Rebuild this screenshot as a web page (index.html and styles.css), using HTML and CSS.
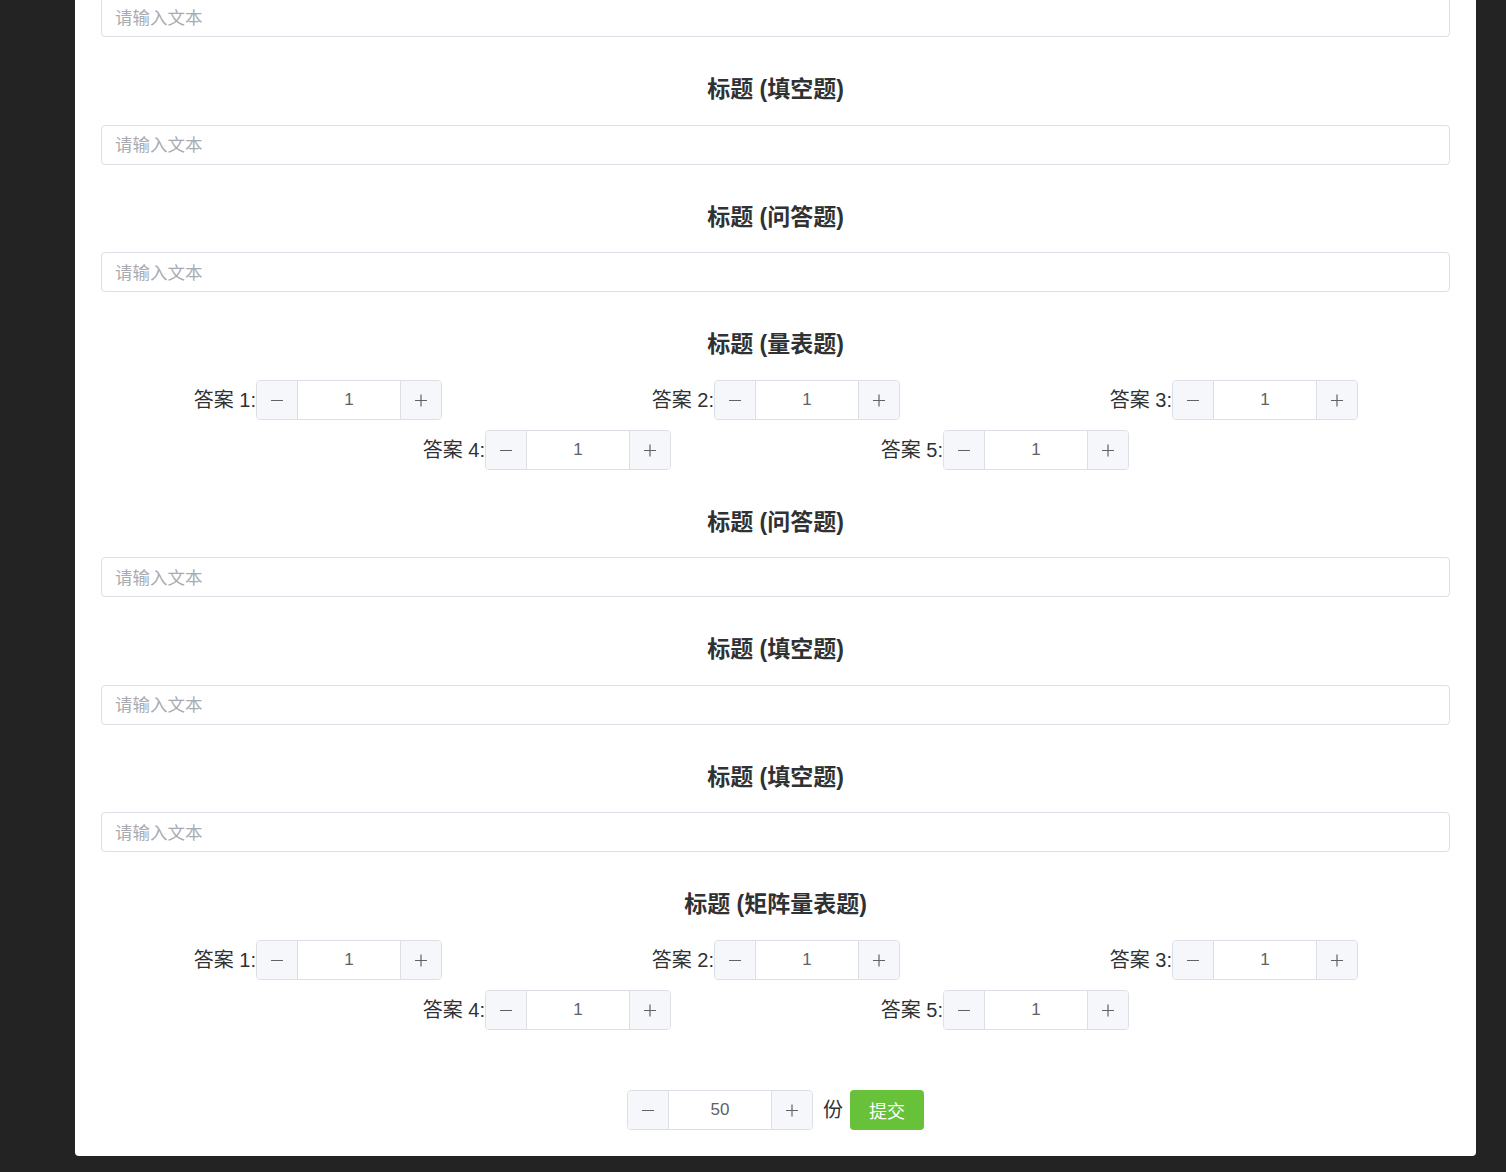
FILE: index.html
```html
<!DOCTYPE html>
<html lang="zh-CN">
<head>
<meta charset="utf-8">
<title>问卷</title>
<link rel="stylesheet" href="styles.css">
</head>
<body>
<div class="card">
  <div class="field"><input class="text-input" type="text" placeholder="请输入文本"></div>

  <h3 class="q-title">标题 (填空题)</h3>
  <div class="field"><input class="text-input" type="text" placeholder="请输入文本"></div>

  <h3 class="q-title">标题 (问答题)</h3>
  <div class="field"><input class="text-input" type="text" placeholder="请输入文本"></div>

  <h3 class="q-title">标题 (量表题)</h3>
  <div class="scale">
    <div class="scale-item"><span class="scale-label">答案 1:</span><div class="num"><span class="num-btn dec"><svg viewBox="0 0 14 14" width="14" height="14"><path d="M1 7.5h12" stroke="#606266" stroke-width="1.2" fill="none"/></svg></span><span class="num-val">1</span><span class="num-btn inc"><svg viewBox="0 0 14 14" width="14" height="14"><path d="M1 7.5h12M7 1.5v12" stroke="#606266" stroke-width="1.2" fill="none"/></svg></span></div></div>
    <div class="scale-item"><span class="scale-label">答案 2:</span><div class="num"><span class="num-btn dec"><svg viewBox="0 0 14 14" width="14" height="14"><path d="M1 7.5h12" stroke="#606266" stroke-width="1.2" fill="none"/></svg></span><span class="num-val">1</span><span class="num-btn inc"><svg viewBox="0 0 14 14" width="14" height="14"><path d="M1 7.5h12M7 1.5v12" stroke="#606266" stroke-width="1.2" fill="none"/></svg></span></div></div>
    <div class="scale-item"><span class="scale-label">答案 3:</span><div class="num"><span class="num-btn dec"><svg viewBox="0 0 14 14" width="14" height="14"><path d="M1 7.5h12" stroke="#606266" stroke-width="1.2" fill="none"/></svg></span><span class="num-val">1</span><span class="num-btn inc"><svg viewBox="0 0 14 14" width="14" height="14"><path d="M1 7.5h12M7 1.5v12" stroke="#606266" stroke-width="1.2" fill="none"/></svg></span></div></div>
    <div class="scale-item"><span class="scale-label">答案 4:</span><div class="num"><span class="num-btn dec"><svg viewBox="0 0 14 14" width="14" height="14"><path d="M1 7.5h12" stroke="#606266" stroke-width="1.2" fill="none"/></svg></span><span class="num-val">1</span><span class="num-btn inc"><svg viewBox="0 0 14 14" width="14" height="14"><path d="M1 7.5h12M7 1.5v12" stroke="#606266" stroke-width="1.2" fill="none"/></svg></span></div></div>
    <div class="scale-item"><span class="scale-label">答案 5:</span><div class="num"><span class="num-btn dec"><svg viewBox="0 0 14 14" width="14" height="14"><path d="M1 7.5h12" stroke="#606266" stroke-width="1.2" fill="none"/></svg></span><span class="num-val">1</span><span class="num-btn inc"><svg viewBox="0 0 14 14" width="14" height="14"><path d="M1 7.5h12M7 1.5v12" stroke="#606266" stroke-width="1.2" fill="none"/></svg></span></div></div>
  </div>

  <h3 class="q-title">标题 (问答题)</h3>
  <div class="field"><input class="text-input" type="text" placeholder="请输入文本"></div>

  <h3 class="q-title">标题 (填空题)</h3>
  <div class="field"><input class="text-input" type="text" placeholder="请输入文本"></div>

  <h3 class="q-title">标题 (填空题)</h3>
  <div class="field"><input class="text-input" type="text" placeholder="请输入文本"></div>

  <h3 class="q-title">标题 (矩阵量表题)</h3>
  <div class="scale">
    <div class="scale-item"><span class="scale-label">答案 1:</span><div class="num"><span class="num-btn dec"><svg viewBox="0 0 14 14" width="14" height="14"><path d="M1 7.5h12" stroke="#606266" stroke-width="1.2" fill="none"/></svg></span><span class="num-val">1</span><span class="num-btn inc"><svg viewBox="0 0 14 14" width="14" height="14"><path d="M1 7.5h12M7 1.5v12" stroke="#606266" stroke-width="1.2" fill="none"/></svg></span></div></div>
    <div class="scale-item"><span class="scale-label">答案 2:</span><div class="num"><span class="num-btn dec"><svg viewBox="0 0 14 14" width="14" height="14"><path d="M1 7.5h12" stroke="#606266" stroke-width="1.2" fill="none"/></svg></span><span class="num-val">1</span><span class="num-btn inc"><svg viewBox="0 0 14 14" width="14" height="14"><path d="M1 7.5h12M7 1.5v12" stroke="#606266" stroke-width="1.2" fill="none"/></svg></span></div></div>
    <div class="scale-item"><span class="scale-label">答案 3:</span><div class="num"><span class="num-btn dec"><svg viewBox="0 0 14 14" width="14" height="14"><path d="M1 7.5h12" stroke="#606266" stroke-width="1.2" fill="none"/></svg></span><span class="num-val">1</span><span class="num-btn inc"><svg viewBox="0 0 14 14" width="14" height="14"><path d="M1 7.5h12M7 1.5v12" stroke="#606266" stroke-width="1.2" fill="none"/></svg></span></div></div>
    <div class="scale-item"><span class="scale-label">答案 4:</span><div class="num"><span class="num-btn dec"><svg viewBox="0 0 14 14" width="14" height="14"><path d="M1 7.5h12" stroke="#606266" stroke-width="1.2" fill="none"/></svg></span><span class="num-val">1</span><span class="num-btn inc"><svg viewBox="0 0 14 14" width="14" height="14"><path d="M1 7.5h12M7 1.5v12" stroke="#606266" stroke-width="1.2" fill="none"/></svg></span></div></div>
    <div class="scale-item"><span class="scale-label">答案 5:</span><div class="num"><span class="num-btn dec"><svg viewBox="0 0 14 14" width="14" height="14"><path d="M1 7.5h12" stroke="#606266" stroke-width="1.2" fill="none"/></svg></span><span class="num-val">1</span><span class="num-btn inc"><svg viewBox="0 0 14 14" width="14" height="14"><path d="M1 7.5h12M7 1.5v12" stroke="#606266" stroke-width="1.2" fill="none"/></svg></span></div></div>
  </div>

  <div class="submit-row">
    <div class="num"><span class="num-btn dec"><svg viewBox="0 0 14 14" width="14" height="14"><path d="M1 7.5h12" stroke="#606266" stroke-width="1.2" fill="none"/></svg></span><span class="num-val">50</span><span class="num-btn inc"><svg viewBox="0 0 14 14" width="14" height="14"><path d="M1 7.5h12M7 1.5v12" stroke="#606266" stroke-width="1.2" fill="none"/></svg></span></div>
    <span class="unit">份</span>
    <button class="submit-btn" type="button">提交</button>
  </div>
</div>
</body>
</html>
```

FILE: styles.css
```css
html, body {
  margin: 0;
  padding: 0;
  background: #232323;
  height: 100%;
  overflow: hidden;
}

body {
  font-family: "Liberation Sans", "Noto Sans CJK SC", sans-serif;
  color: #303133;
}

.card {
  width: 1349px;
  margin: -3px 0 0 75px;
  padding: 0 26px 26px;
  background: #ffffff;
  border-radius: 0 0 4px 4px;
}

.field {
  height: 40px;
}

.text-input {
  box-sizing: border-box;
  width: 100%;
  height: 40px;
  border: 1px solid #dcdfe6;
  border-radius: 4px;
  padding: 2px 13px 0;
  font-family: "Liberation Sans", "Noto Sans CJK SC", sans-serif;
  font-size: 17.5px;
  color: #606266;
  outline: none;
  background: #fff;
}

.text-input::placeholder {
  color: #a8abb2;
}

.q-title {
  margin: 37px 0 20.55px;
  height: 30px;
  line-height: 30px;
  text-align: center;
  font-size: 23px;
  font-weight: bold;
  color: #303133;
}

.scale {
  display: flex;
  flex-wrap: wrap;
  justify-content: center;
  column-gap: 209px;
  row-gap: 10px;
}

.scale-item {
  display: flex;
  align-items: center;
  width: 249px;
  height: 40px;
}

.scale-label {
  flex: 1;
  text-align: right;
  white-space: nowrap;
  font-size: 20px;
  line-height: 24px;
  padding-top: 1px;
  color: #303133;
}

.num {
  box-sizing: border-box;
  display: flex;
  width: 186px;
  height: 40px;
  border: 1px solid #dcdfe6;
  border-radius: 4px;
  overflow: hidden;
  flex: none;
}

.num-btn {
  width: 40px;
  display: flex;
  align-items: center;
  justify-content: center;
  background: #f5f7fa;
}

.num-btn.dec {
  border-right: 1px solid #dcdfe6;
}

.num-btn.inc {
  border-left: 1px solid #dcdfe6;
}

.num-val {
  flex: 1;
  display: flex;
  align-items: center;
  justify-content: center;
  font-size: 17px;
  padding-top: 1px;
  color: #606266;
  background: #fff;
}

.submit-row {
  display: flex;
  justify-content: center;
  align-items: center;
  margin-top: 60px;
}

.unit {
  margin: 0 7px 0 10px;
  font-size: 20px;
  line-height: 24px;
  padding-top: 1px;
  color: #303133;
}

.submit-btn {
  width: 74px;
  height: 40px;
  border: none;
  border-radius: 4px;
  background: #67c23a;
  color: #ffffff;
  font-family: "Liberation Sans", "Noto Sans CJK SC", sans-serif;
  font-size: 18px;
  padding: 0;
}
```
